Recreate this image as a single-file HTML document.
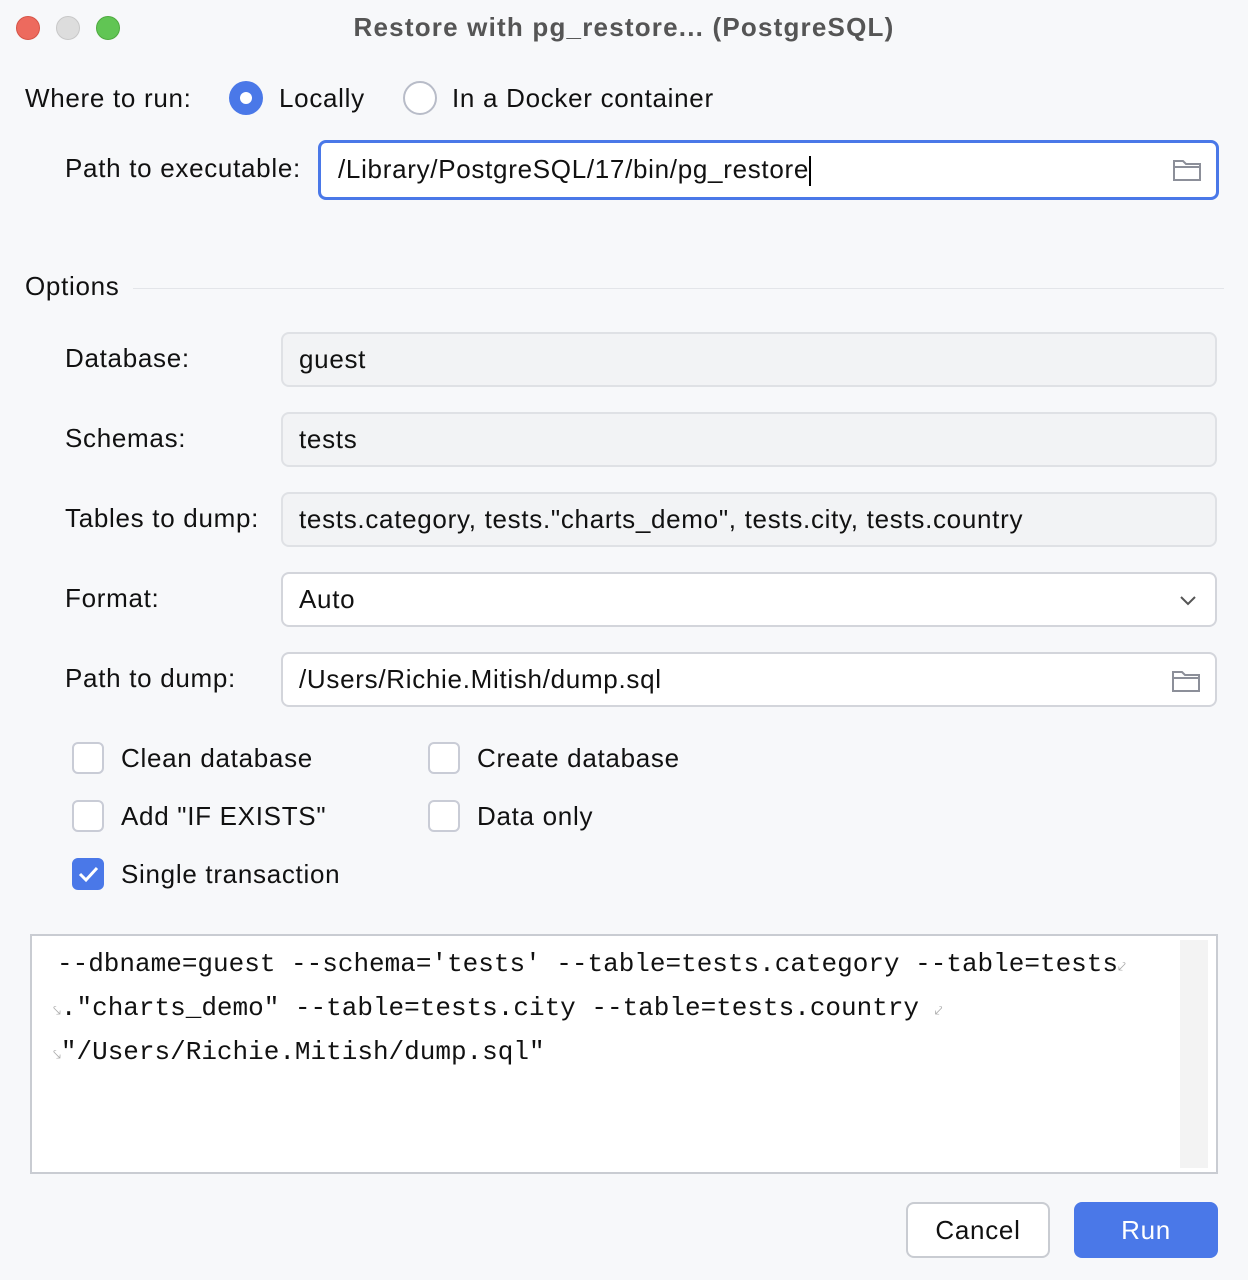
<!DOCTYPE html>
<html><head><style>
*{box-sizing:border-box;margin:0;padding:0}
body{width:1248px;height:1280px;background:#f7f8fa;font-family:"Liberation Sans",sans-serif;font-size:26px;letter-spacing:0.7px;color:#111;position:relative;overflow:hidden}
.a{position:absolute;white-space:nowrap}
.dot{position:absolute;top:16px;width:24px;height:24px;border-radius:50%}
.field{position:absolute;left:281px;width:936px;height:55px;border:2px solid #dfe1e5;border-radius:8px;background:#f2f3f5;padding-left:16px;line-height:51px}
.white{background:#fff}
.cb{position:absolute;width:32px;height:32px;border:2px solid #c9ccd6;border-radius:6px;background:#fff}
.folder{position:absolute;right:14px;top:14px}
.w{font-size:14px;color:#aaa;line-height:0;letter-spacing:0}
</style></head><body>
<div class="dot" style="left:16px;background:#ed6a5e;border:1px solid #d65447"></div>
<div class="dot" style="left:56px;background:#dddddd;border:1px solid #c8c8c8"></div>
<div class="dot" style="left:96px;background:#61c554;border:1px solid #4eaa3f"></div>
<div class="a" style="left:0;width:1248px;text-align:center;top:12px;font-weight:bold;color:#555;font-size:26px;letter-spacing:1.2px">Restore with pg_restore... (PostgreSQL)</div>

<div class="a" style="left:25px;top:83px">Where to run:</div>
<div class="a" style="left:229px;top:81px;width:34px;height:34px;border-radius:50%;background:#4a78e8"><div style="position:absolute;left:11px;top:11px;width:12px;height:12px;border-radius:50%;background:#fff"></div></div>
<div class="a" style="left:279px;top:83px">Locally</div>
<div class="a" style="left:403px;top:81px;width:34px;height:34px;border-radius:50%;border:2px solid #b8bcc8;background:#fff"></div>
<div class="a" style="left:452px;top:83px">In a Docker container</div>

<div class="a" style="left:65px;top:153px">Path to executable:</div>
<div class="a" style="left:318px;top:140px;width:901px;height:60px;border:3px solid #4a78e8;border-radius:8px;background:#fff;padding-left:17px;line-height:53px">/Library/PostgreSQL/17/bin/pg_restore<span style="display:inline-block;width:2px;height:30px;background:#000;vertical-align:middle"></span>
<svg class="folder" width="30" height="26" viewBox="0 0 30 26"><path d="M2 4h9l3 3h14v16H2z" fill="none" stroke="#8c8f99" stroke-width="2"/><path d="M2 10h26" stroke="#8c8f99" stroke-width="2"/></svg></div>

<div class="a" style="left:25px;top:271px">Options</div>
<div class="a" style="left:133px;top:288px;width:1091px;height:1px;background:#e3e5e9"></div>

<div class="a" style="left:65px;top:343px">Database:</div>
<div class="field" style="top:332px">guest</div>
<div class="a" style="left:65px;top:423px">Schemas:</div>
<div class="field" style="top:412px">tests</div>
<div class="a" style="left:65px;top:503px">Tables to dump:</div>
<div class="field" style="top:492px">tests.category, tests."charts_demo", tests.city, tests.country</div>
<div class="a" style="left:65px;top:583px">Format:</div>
<div class="field white" style="top:572px;border-color:#d3d5db">Auto<svg style="position:absolute;right:18px;top:20px" width="18" height="12" viewBox="0 0 18 12"><path d="M2 3l7 7 7-7" fill="none" stroke="#555" stroke-width="2"/></svg></div>
<div class="a" style="left:65px;top:663px">Path to dump:</div>
<div class="field white" style="top:652px;border-color:#d3d5db">/Users/Richie.Mitish/dump.sql<svg class="folder" width="30" height="26" viewBox="0 0 30 26"><path d="M2 4h9l3 3h14v16H2z" fill="none" stroke="#8c8f99" stroke-width="2"/><path d="M2 10h26" stroke="#8c8f99" stroke-width="2"/></svg></div>

<div class="cb" style="left:72px;top:742px"></div><div class="a" style="left:121px;top:743px">Clean database</div>
<div class="cb" style="left:428px;top:742px"></div><div class="a" style="left:477px;top:743px">Create database</div>
<div class="cb" style="left:72px;top:800px"></div><div class="a" style="left:121px;top:801px">Add "IF EXISTS"</div>
<div class="cb" style="left:428px;top:800px"></div><div class="a" style="left:477px;top:801px">Data only</div>
<div class="cb" style="left:72px;top:858px;background:#4a78e8;border-color:#4a78e8"><svg width="28" height="28" viewBox="0 0 28 28"><path d="M6 14l6 6 11-12" fill="none" stroke="#fff" stroke-width="3"/></svg></div><div class="a" style="left:121px;top:859px">Single transaction</div>

<div class="a" style="left:30px;top:934px;width:1188px;height:240px;border:2px solid #c9ccd2;background:#fff"></div>
<div class="a" style="left:1180px;top:940px;width:28px;height:228px;background:#f3f3f3"></div>
<div class="a" style="left:57px;top:942px;font-family:'Liberation Mono',monospace;font-size:26px;letter-spacing:0;line-height:44px;color:#111">--dbname=guest --schema='tests' --table=tests.category --table=tests<span class="w">⤦</span><br><span class="w" style="margin-left:-4px">⤥</span>."charts_demo" --table=tests.city --table=tests.country <span class="w">⤦</span><br><span class="w" style="margin-left:-4px">⤥</span>"/Users/Richie.Mitish/dump.sql"</div>

<div class="a" style="left:906px;top:1202px;width:144px;height:56px;border:2px solid #c9ccd2;border-radius:8px;background:#fff;text-align:center;line-height:52px">Cancel</div>
<div class="a" style="left:1074px;top:1202px;width:144px;height:56px;border-radius:8px;background:#4a78e8;color:#fff;text-align:center;line-height:56px">Run</div>
</body></html>
